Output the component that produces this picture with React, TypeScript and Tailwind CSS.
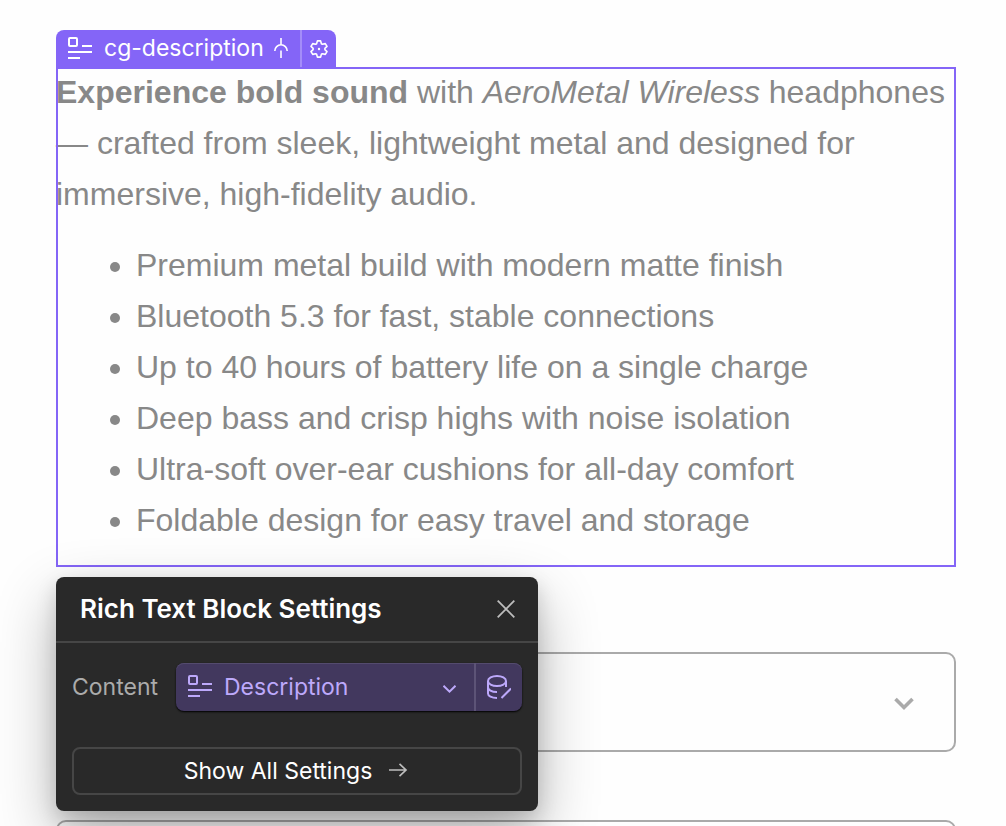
import type { ReactNode } from "react";

const features = [
  "Premium metal build with modern matte finish",
  "Bluetooth 5.3 for fast, stable connections",
  "Up to 40 hours of battery life on a single charge",
  "Deep bass and crisp highs with noise isolation",
  "Ultra-soft over-ear cushions for all-day comfort",
  "Foldable design for easy travel and storage",
];

function RichTextIcon({ className }: { className?: string }) {
  return (
    <svg className={className} width="24" height="22" viewBox="0 0 24 22" fill="none" stroke="currentColor" strokeWidth="2">
      <rect x="1" y="1" width="8" height="8" rx="1" />
      <path d="M14 9H24M0 15H24M0 21H12" />
    </svg>
  );
}

function MergeIcon() {
  return (
    <svg width="14" height="20" viewBox="0 0 14 20" fill="none" stroke="currentColor" strokeWidth="1.6">
      <path d="M7 0V6.5M7 12.5V20M0.8 13C0.8 9.5 3.6 6.8 7 6.8S13.2 9.5 13.2 13" />
    </svg>
  );
}

function GearIcon() {
  return (
    <svg width="18" height="18" viewBox="0 0 18 18" fill="none" stroke="currentColor" strokeWidth="1.6" strokeLinejoin="round">
      <path d="M7.4 0.9H10.6L11.4 3.7L12.4 4.3L15.3 3.6L17 6.4L14.9 8.4V9.6L17 11.6L15.3 14.4L12.4 13.7L11.4 14.3L10.6 17.1H7.4L6.6 14.3L5.6 13.7L2.7 14.4L1 11.6L3.1 9.6V8.4L1 6.4L2.7 3.6L5.6 4.3L6.6 3.7Z" />
      <circle cx="9" cy="9" r="1.2" fill="currentColor" stroke="none" />
    </svg>
  );
}

function DatabaseEditIcon() {
  return (
    <svg width="24" height="24" viewBox="0 0 24 24" fill="none" stroke="currentColor" strokeWidth="2">
      <ellipse cx="10" cy="6" rx="9" ry="5" />
      <path d="M1 6V18.5C1 21 4.5 23 10 23M1 12.2C1 14.8 4.5 17 10 17M19 6V12M14.5 23L24 13.5" />
    </svg>
  );
}

function OptionSelect({ label }: { label: string }) {
  return (
    <div className="relative text-[#aaa]">
      <select aria-label={label} className="block h-[100px] w-full appearance-none rounded-[10px] border-2 border-[#aaa] bg-transparent px-6" />
      <svg className="pointer-events-none absolute top-[45px] right-[42px]" width="20" height="14" viewBox="0 0 20 14" fill="none" stroke="currentColor" strokeWidth="3.6">
        <path d="M1.5 2L10 10.5L18.5 2" />
      </svg>
    </div>
  );
}

function ElementTag({ children }: { children: ReactNode }) {
  return (
    <div className="flex h-[37px] w-fit items-stretch overflow-hidden rounded-t-lg bg-[#8465f7] font-['Inter',sans-serif] text-white">
      <div className="flex items-center px-3 pb-0.5">
        <RichTextIcon />
        <span className="mr-2.5 ml-3 text-[23px] leading-7">{children}</span>
        <MergeIcon />
      </div>
      <button type="button" aria-label="Settings" className="flex w-9 items-center justify-center border-l-2 border-[#a48df9]">
        <GearIcon />
      </button>
    </div>
  );
}

function SettingsPopover() {
  return (
    <section className="absolute top-full left-0 mt-[10px] w-[482px] rounded-lg bg-[#292929] pb-4 font-['Inter',sans-serif] shadow-[0_24px_60px_rgba(0,0,0,0.3),0_8px_20px_rgba(0,0,0,0.15)]">
      <header className="flex h-[66px] items-center justify-between border-b-2 border-[#464646] pr-[23px] pl-6 text-white">
        <h2 className="text-[26px] leading-8 font-semibold">Rich Text Block Settings</h2>
        <button type="button" aria-label="Close" className="text-[#bdbdbd]">
          <svg width="18" height="18" viewBox="0 0 18 18" fill="none" stroke="currentColor" strokeWidth="1.8">
            <path d="M0.7 0.7L17.3 17.3M17.3 0.7L0.7 17.3" />
          </svg>
        </button>
      </header>

      <div className="flex items-center px-4 pt-5">
        <label htmlFor="content" className="w-[104px] text-[23px] leading-7 text-[#ababab]">
          Content
        </label>
        <div className="flex h-12 flex-1 overflow-hidden rounded-lg bg-[#42385e] text-[#bda9fb] shadow-[0_1px_2px_#000,inset_0_1px_0_#544b6e]">
          <div className="relative flex-1">
            <RichTextIcon className="pointer-events-none absolute top-3 left-3" />
            <select id="content" className="block h-12 w-full appearance-none pl-12 text-[23px] leading-7">
              <option>Description</option>
            </select>
            <svg className="pointer-events-none absolute top-[22px] right-[18px]" width="13" height="8" viewBox="0 0 13 8" fill="none" stroke="currentColor" strokeWidth="2">
              <path d="M0.5 0.8L6.5 6.6L12.5 0.8" />
            </svg>
          </div>
          <button type="button" aria-label="Edit binding" className="flex w-12 items-center justify-center border-l-2 border-[#5d5477]">
            <DatabaseEditIcon />
          </button>
        </div>
      </div>

      <div className="px-4 pt-9">
        <button type="button" className="flex h-12 w-full items-center justify-center gap-3.5 rounded-lg border-2 border-[#464646] text-[23px] leading-7 text-white">
          Show All Settings
          <svg className="text-[#bdbdbd]" width="24" height="24" viewBox="0 0 24 24" fill="none" stroke="currentColor" strokeWidth="1.7">
            <path d="M3 11H20M13.5 4.8L20 11L13.5 17.2" />
          </svg>
        </button>
      </div>
    </section>
  );
}

export default function App() {
  return (
    <main className="h-screen overflow-hidden bg-[#fefefe] pt-[30px] pr-[50px] pl-14 font-['Liberation_Sans',Arial,sans-serif]">
      <ElementTag>cg-description</ElementTag>

      <div className="relative z-10 mb-[85px] pb-[21px] text-[32px] leading-[51px] text-[#888] outline-2 -outline-offset-2 outline-[#8465f7]">
        <p>
          <strong>Experience bold sound</strong> with <em>AeroMetal Wireless</em> headphones — crafted from sleek,
          lightweight metal and designed for immersive, high-fidelity audio.
        </p>
        <ul className="mt-5 list-disc pl-20">
          {features.map((feature) => (
            <li key={feature}>{feature}</li>
          ))}
        </ul>
        <SettingsPopover />
      </div>

      <div className="flex flex-col gap-[68px]">
        <OptionSelect label="Color" />
        <OptionSelect label="Size" />
      </div>
    </main>
  );
}
